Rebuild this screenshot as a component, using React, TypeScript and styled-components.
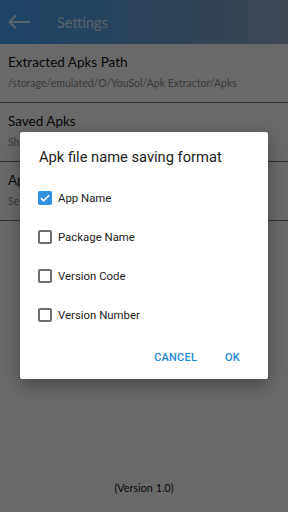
import React from "react";
import styled, { createGlobalStyle } from "styled-components";

const Global = createGlobalStyle`
  html, body { margin: 0; padding: 0; }
  body { width: 288px; height: 512px; overflow: hidden; background: #fff; }
  * { box-sizing: border-box; }
`;

const Screen = styled.div`
  position: relative;
  width: 288px;
  height: 512px;
  display: flex;
  flex-direction: column;
  background: #fbfbfb;
  font-family: Lato, "Open Sans", sans-serif;
`;

const Toolbar = styled.div`
  height: 44px;
  flex: none;
  display: flex;
  align-items: center;
  gap: 27px;
  padding-left: 8px;
  background: linear-gradient(90deg, #42a2f2 0%, #6a9fd0 55%, #94a8c4 100%);
`;

const ToolbarTitle = styled.div`
  font-size: 14.5px;
  color: rgba(255, 255, 255, 0.78);
`;

const List = styled.div`
  display: flex;
  flex-direction: column;
`;

const Row = styled.div`
  height: 59px;
  padding: 9px 8px 0;
  border-bottom: 1px solid #777;
  display: flex;
  flex-direction: column;
  gap: 4px;
`;

const RowTitle = styled.div`
  font-size: 13.5px;
  line-height: 18px;
  color: #141414;
`;

const RowSub = styled.div`
  font-size: 10.5px;
  line-height: 16px;
  color: #8a8a8a;
  white-space: nowrap;
`;

const Spacer = styled.div`
  flex: 1;
`;

const Footer = styled.div`
  height: 48px;
  display: flex;
  align-items: center;
  justify-content: center;
  padding-bottom: 2px;
  font-size: 10.8px;
  color: #111;
`;

const Scrim = styled.div`
  position: absolute;
  inset: 0;
  background: rgba(0, 0, 0, 0.58);
  display: flex;
  align-items: center;
  justify-content: center;
`;

const Dialog = styled.div`
  width: 248px;
  height: 247px;
  margin-top: -1px;
  background: #fff;
  border-radius: 2px;
  box-shadow: 0 6px 18px rgba(0, 0, 0, 0.35);
  display: flex;
  flex-direction: column;
  padding: 15px 0 4px;
  font-family: Roboto, "Noto Sans", sans-serif;
`;

const DialogTitle = styled.div`
  padding-left: 19px;
  font-size: 14.7px;
  line-height: 20px;
  color: #212121;
`;

const Options = styled.div`
  margin-top: 11.5px;
  display: flex;
  flex-direction: column;
`;

const Option = styled.label`
  height: 39px;
  display: flex;
  align-items: center;
  gap: 6px;
  padding-left: 18px;
  font-size: 11.4px;
  color: #222;
`;

const Box = styled.span<{ $checked?: boolean }>`
  width: 14px;
  height: 14px;
  border-radius: 2px;
  display: flex;
  align-items: center;
  justify-content: center;
  background: ${(p) => (p.$checked ? "#2f8fe0" : "transparent")};
  border: ${(p) => (p.$checked ? "none" : "2px solid #6f6f6f")};
`;

const Actions = styled.div`
  margin-top: auto;
  height: 36px;
  display: flex;
  align-items: center;
  justify-content: flex-end;
  gap: 12px;
  padding-right: 20px;
`;

const Action = styled.button`
  border: none;
  background: none;
  padding: 0 8px;
  font-family: Roboto, "Noto Sans", sans-serif;
  font-weight: 500;
  font-size: 11px;
  letter-spacing: 0.2px;
  color: #1e88d2;
`;

const options = [
  { label: "App Name", checked: true },
  { label: "Package Name", checked: false },
  { label: "Version Code", checked: false },
  { label: "Version Number", checked: false },
];

const rows = [
  { title: "Extracted Apks Path", sub: "/storage/emulated/O/YouSol/Apk Extractor/Apks" },
  { title: "Saved Apks", sub: "Show saved apks" },
  { title: "Apk file name format", sub: "Select apk file name format" },
];

export default function App() {
  return (
    <>
      <Global />
      <Screen>
        <Toolbar>
          <svg width="22" height="16" viewBox="0 0 22 16" fill="none">
            <path d="M22 8H1.5M8 1.5L1.5 8 8 14.5" stroke="rgba(255,255,255,0.8)" strokeWidth="2" />
          </svg>
          <ToolbarTitle>Settings</ToolbarTitle>
        </Toolbar>
        <List>
          {rows.map((r) => (
            <Row key={r.title}>
              <RowTitle>{r.title}</RowTitle>
              <RowSub>{r.sub}</RowSub>
            </Row>
          ))}
        </List>
        <Spacer />
        <Footer>(Version 1.0)</Footer>
        <Scrim>
          <Dialog>
            <DialogTitle>Apk file name saving format</DialogTitle>
            <Options>
              {options.map((o) => (
                <Option key={o.label}>
                  <Box $checked={o.checked}>
                    {o.checked && (
                      <svg width="12" height="12" viewBox="0 0 12 12" fill="none">
                        <path d="M2 6.2l2.6 2.6L10 3.4" stroke="#fff" strokeWidth="1.8" />
                      </svg>
                    )}
                  </Box>
                  {o.label}
                </Option>
              ))}
            </Options>
            <Actions>
              <Action>CANCEL</Action>
              <Action>OK</Action>
            </Actions>
          </Dialog>
        </Scrim>
      </Screen>
    </>
  );
}
